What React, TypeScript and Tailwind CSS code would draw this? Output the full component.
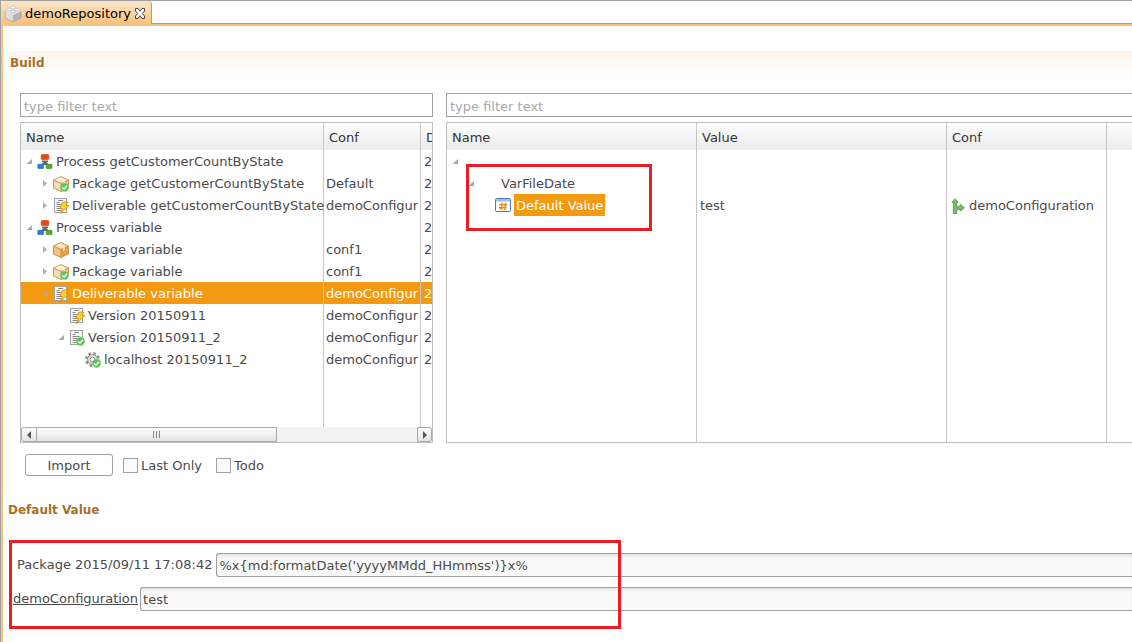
import type { ReactNode } from "react";

function BrickIcon() {
  return (
    <svg width="18" height="18" viewBox="0 0 18 18" className="shrink-0">
      <path d="M1 6 9 10v7L1 13Z" fill="#dedede" />
      <path d="M17 6 9 10v7l8-4Z" fill="#b4b4b4" />
      <path d="M1 6 9 2.500 17 6 9 10Z" fill="#f0f0f0" />
      <path d="M1 6v7l8 4 8-4V6" fill="none" stroke="#a3a3a3" strokeWidth=".8" />
      <g stroke="#bcbcbc" strokeWidth=".6" fill="#fafafa">
        <path d="M6.600 2.500v1.400c0 1.400 4.800 1.400 4.800 0V2.500" />
        <ellipse cx="9" cy="2.500" rx="2.400" ry="1.200" />
        <path d="M2.700 4.500v1.400c0 1.400 4.800 1.400 4.800 0V4.500" />
        <ellipse cx="5.100" cy="4.500" rx="2.400" ry="1.200" />
        <path d="M10.500 4.500v1.400c0 1.400 4.800 1.400 4.800 0V4.500" />
        <ellipse cx="12.900" cy="4.500" rx="2.400" ry="1.200" />
        <path d="M6.600 6.500v1.400c0 1.400 4.800 1.400 4.800 0V6.500" />
        <ellipse cx="9" cy="6.500" rx="2.400" ry="1.200" />
      </g>
    </svg>
  );
}

function CloseIcon() {
  return (
    <svg width="12" height="12" viewBox="0 0 12 12">
      <path
        d="M1.500.5h2.500L6 3.300 8 .5h2.500v2.500L8.300 5.500l2.200 2.500v2.500H8L6 7.700 4 10.500H1.500V8l2.200-2.500L1.500 3Z"
        fill="#fff"
        stroke="#4b4040"
        strokeWidth="1"
      />
    </svg>
  );
}

function CheckBadge() {
  return (
    <g>
      <circle cx="11.500" cy="11.300" r="4.200" fill="#5cc454" stroke="#8fd68a" strokeWidth=".8" />
      <path d="M9.200 11.400 11 13.100 14 9.700" fill="none" stroke="#fff" strokeWidth="1.400" />
    </g>
  );
}

function Bolt() {
  return (
    <path
      d="M10 4h5L13 7.500h3L7.500 15.500l2-5H6.700Z"
      fill="#fdd32c"
      stroke="#c48717"
      strokeWidth=".8"
      strokeLinejoin="round"
    />
  );
}

function ProcessIcon() {
  return (
    <svg width="16" height="16" viewBox="0 0 16 16" className="shrink-0">
      <path d="M5 6.500h6V8l-1.500.5 3 2.500h-9l3-2.500L5 8Z" fill="#686868" />
      <rect x="4.200" y=".5" width="7.600" height="5" rx="1" fill="#e64a12" stroke="#c93a08" strokeWidth=".6" />
      <rect x=".8" y="10.300" width="5.800" height="4.200" rx=".6" fill="#2c7fd0" stroke="#1b62ad" strokeWidth=".6" />
      <rect x="9.200" y="10.300" width="5.800" height="4.200" rx=".6" fill="#55ac2c" stroke="#3d8d1b" strokeWidth=".6" />
    </svg>
  );
}

function PackageIcon({ checked = false }: { checked?: boolean }) {
  return (
    <svg width="16" height="16" viewBox="0 0 16 16" className="shrink-0">
      <path d="M8 .5 15.500 4v8L8 15.500.5 12V4Z" fill={checked ? "#f0c084" : "#e9a046"} />
      <path d="M.5 4 8 7.500v8L.5 12Z" fill={checked ? "#f8dab0" : "#f6c37f"} />
      <path d="M8 .5 15.500 4 8 7.500.5 4Z" fill={checked ? "#fceacf" : "#fbdcae"} />
      <path
        d="M8 .5 15.500 4v8L8 15.500.5 12V4ZM.5 4 8 7.500 15.500 4M8 7.500v8"
        fill="none"
        stroke="#c68743"
        strokeWidth=".8"
        strokeLinejoin="round"
      />
      <path d="M3.500 2.700 10 6v3l2-1V5.200L5.700 1.700Z" fill="#fff3de" opacity=".8" />
      {checked && <CheckBadge />}
    </svg>
  );
}

function DocIcon({ badge }: { badge: "bolt" | "check" }) {
  return (
    <svg width="16" height="16" viewBox="0 0 16 16" className="shrink-0">
      <rect x="1.500" y=".5" width="12" height="14" fill="#f6f6f6" stroke="#a2a2a2" />
      <path
        d="M5 2.500h5M3.500 4.500h3M3.500 6.500h7M3.500 8.500h6M3.500 10.500h5M3.500 12.500h5"
        stroke="#8b8b8b"
        strokeWidth="1"
      />
      {badge === "bolt" ? <Bolt /> : <CheckBadge />}
    </svg>
  );
}

function GearIcon() {
  return (
    <svg width="16" height="16" viewBox="0 0 16 16" className="shrink-0">
      <circle cx="7.500" cy="7.500" r="6.200" fill="none" stroke="#8a8a8a" strokeWidth="2.400" strokeDasharray="2.600 2.270" />
      <circle cx="7.500" cy="7.500" r="5" fill="#dcdcdc" stroke="#8a8a8a" strokeWidth=".9" />
      <circle cx="7.500" cy="7.500" r="2.300" fill="#fff" stroke="#8a8a8a" strokeWidth=".9" />
      <CheckBadge />
    </svg>
  );
}

function HashIcon() {
  return (
    <svg width="16" height="16" viewBox="0 0 16 16" className="shrink-0">
      <rect x=".5" y="1.500" width="15" height="13" rx="1" fill="#fff" stroke="#4a78b8" />
      <path d="M1 2h14v2.500H1z" fill="#9dc0ea" />
      <path d="M7.200 5.500 6 13M10.700 5.500 9.500 13M4.300 7.800h8M3.800 10.800h8" stroke="#f08a12" strokeWidth="1.400" fill="none" />
    </svg>
  );
}

function BranchIcon() {
  return (
    <svg width="14" height="16" viewBox="0 0 14 16" className="shrink-0">
      <path
        d="M4 .7 7.200 4.300H5.600v5.200c.7-1 1.800-1.500 3.800-1.500V6.300l4 3.400-4 3.300v-1.800c-2.200 0-3.400.8-3.800 2v2.300H2.400V4.300H.8Z"
        fill="#76c16b"
        stroke="#4a9442"
        strokeWidth=".8"
        strokeLinejoin="round"
      />
    </svg>
  );
}

type Expander = "open" | "closed" | "none";

function ExpanderMark({ state }: { state: Expander }) {
  return (
    <svg width="16" height="16" viewBox="0 0 16 16" className="shrink-0">
      {state === "open" && <path d="M11 5v5H5.500Z" fill="#a9a9a9" />}
      {state === "closed" && <path d="M6 4v7L10 7.500Z" fill="#b0b0b0" />}
    </svg>
  );
}

type BuildRow = {
  level: string;
  expander: Expander;
  icon: ReactNode;
  name: string;
  conf: string;
  selected?: boolean;
};

const buildRows: BuildRow[] = [
  { level: "pl-0", expander: "open", icon: <ProcessIcon />, name: "Process getCustomerCountByState", conf: "" },
  { level: "pl-4", expander: "closed", icon: <PackageIcon checked />, name: "Package getCustomerCountByState", conf: "Default" },
  { level: "pl-4", expander: "closed", icon: <DocIcon badge="bolt" />, name: "Deliverable getCustomerCountByState", conf: "demoConfiguration" },
  { level: "pl-0", expander: "open", icon: <ProcessIcon />, name: "Process variable", conf: "" },
  { level: "pl-4", expander: "closed", icon: <PackageIcon />, name: "Package variable", conf: "conf1" },
  { level: "pl-4", expander: "closed", icon: <PackageIcon checked />, name: "Package variable", conf: "conf1" },
  { level: "pl-4", expander: "open", icon: <DocIcon badge="bolt" />, name: "Deliverable variable", conf: "demoConfiguration", selected: true },
  { level: "pl-8", expander: "none", icon: <DocIcon badge="bolt" />, name: "Version 20150911", conf: "demoConfiguration" },
  { level: "pl-8", expander: "open", icon: <DocIcon badge="check" />, name: "Version 20150911_2", conf: "demoConfiguration" },
  { level: "pl-12", expander: "none", icon: <GearIcon />, name: "localhost 20150911_2", conf: "demoConfiguration" },
];

const headCell =
  "h-[27px] border-r border-[#c6c6c6] bg-linear-to-b from-[#fdfdfd] to-[#ebebeb] px-[5px] pt-0.5 text-left font-normal text-[#333]";
const bodyCell = "h-[22px] border-r border-[#c6c6c6] p-0 pt-0.5";
const filterInput =
  "h-6 w-full border border-[#a0a0a0] bg-white px-[3px] pt-0.5 outline-none placeholder:text-[#a9a9a9]";
const valueInput =
  "h-6 min-w-0 flex-1 rounded-l-[3px] border border-r-0 border-[#a0a0a0] bg-[#fafafa] px-[2px] shadow-[inset_0_3px_4px_-2px_#d4d4d4] outline-none";
const checkbox = "size-[15px] appearance-none border border-[#a0a0a0] bg-[#fafbfd] checked:bg-[#f49a12]";
const heading = "text-[12px] leading-4 font-bold text-[#a76f26]";

function BuildTree() {
  return (
    <div className="border border-[#bdbdbd]">
      <div className="overflow-hidden">
        <table className="w-[480px] table-fixed border-separate border-spacing-0">
          <colgroup>
            <col className="w-[303px]" />
            <col className="w-[97px]" />
            <col />
          </colgroup>
          <thead>
            <tr>
              <th className={headCell}>Name</th>
              <th className={headCell}>Conf</th>
              <th className={headCell}>Date</th>
            </tr>
          </thead>
          <tbody>
            {buildRows.map((row, i) => (
              <tr key={i} className={row.selected ? "bg-[#f49a12] text-white" : ""}>
                <td className={bodyCell}>
                  <div className={`flex items-center ${row.level}`}>
                    <ExpanderMark state={row.expander} />
                    {row.icon}
                    <span className="ml-[3px] whitespace-nowrap">{row.name}</span>
                  </div>
                </td>
                <td className={bodyCell}>
                  <div className="mr-0.5 ml-0.5 overflow-hidden whitespace-nowrap">{row.conf}</div>
                </td>
                <td className={`${bodyCell} pl-[3px]`}>2015</td>
              </tr>
            ))}
            <tr>
              <td className="h-[57px] border-r border-[#c6c6c6]" />
              <td className="h-[57px] border-r border-[#c6c6c6]" />
              <td />
            </tr>
          </tbody>
        </table>
      </div>
      <div className="flex h-[15px] bg-[#f2f2f2]">
        <button
          aria-label="Scroll left"
          className="flex w-4 items-center justify-center rounded-l-[3px] border border-[#a9a9a9] bg-linear-to-b from-white to-[#e4e4e4]"
        >
          <svg width="6" height="8" viewBox="0 0 6 8">
            <path d="M5 0v8L1 4Z" fill="#555" />
          </svg>
        </button>
        <div className="flex w-[240px] items-center justify-center gap-0.5 border border-l-0 border-[#a9a9a9] bg-linear-to-b from-white to-[#e2e2e2]">
          <span className="h-[7px] w-px bg-[#888]" />
          <span className="h-[7px] w-px bg-[#888]" />
          <span className="h-[7px] w-px bg-[#888]" />
        </div>
        <button
          aria-label="Scroll right"
          className="ml-auto flex w-[15px] items-center justify-center rounded-r-[3px] border border-[#a9a9a9] bg-linear-to-b from-white to-[#e4e4e4]"
        >
          <svg width="6" height="8" viewBox="0 0 6 8">
            <path d="M1 0v8L5 4Z" fill="#555" />
          </svg>
        </button>
      </div>
    </div>
  );
}

function VariableTree() {
  return (
    <div className="relative flex-1 border border-r-0 border-[#bdbdbd]">
      <table className="h-full w-full table-fixed border-separate border-spacing-0">
        <colgroup>
          <col className="w-[250px]" />
          <col className="w-[250px]" />
          <col className="w-[160px]" />
          <col />
        </colgroup>
        <thead>
          <tr>
            <th className={headCell}>Name</th>
            <th className={headCell}>Value</th>
            <th className={headCell}>Conf</th>
            <th className="h-[27px] bg-linear-to-b from-[#fdfdfd] to-[#ebebeb]" />
          </tr>
        </thead>
        <tbody>
          <tr>
            <td className={bodyCell}>
              <ExpanderMark state="open" />
            </td>
            <td className={bodyCell} />
            <td className={bodyCell} />
            <td />
          </tr>
          <tr>
            <td className={bodyCell}>
              <div className="flex items-center pl-4">
                <ExpanderMark state="open" />
                <span className="ml-[22px]">VarFileDate</span>
              </div>
            </td>
            <td className={bodyCell} />
            <td className={bodyCell} />
            <td />
          </tr>
          <tr>
            <td className="h-[22px] border-r border-[#c6c6c6] p-0">
              <div className="flex items-center pl-12">
                <HashIcon />
                <span className="ml-[3px] bg-[#f49a12] px-0.5 pt-0.5 leading-5 text-white">Default Value</span>
              </div>
            </td>
            <td className={`${bodyCell} pl-[3px]`}>test</td>
            <td className={bodyCell}>
              <div className="flex items-center gap-1 pl-1">
                <BranchIcon />
                <span>demoConfiguration</span>
              </div>
            </td>
            <td />
          </tr>
          <tr className="h-full">
            <td className="border-r border-[#c6c6c6]" />
            <td className="border-r border-[#c6c6c6]" />
            <td className="border-r border-[#c6c6c6]" />
            <td />
          </tr>
        </tbody>
      </table>
      <div className="pointer-events-none absolute top-[41px] left-[19px] h-[67px] w-[186px] border-3 border-[#ed1c24]" />
    </div>
  );
}

export default function App() {
  return (
    <div className="flex min-h-screen flex-col overflow-hidden border-l border-[#a0a0a0] bg-white font-['DejaVu_Sans',Verdana,sans-serif] text-[13px] leading-4 text-[#4a4a4a]">
      <header className="flex h-6 border-t border-[#a0a0a0]">
        <div className="flex items-center gap-[3px] rounded-t-sm border-r border-[#a0a0a0] bg-linear-to-b from-[#fae6cc] to-[#f6c27a] pt-0.5 pr-[5px] pl-[3px] text-black">
          <BrickIcon />
          <span>demoRepository</span>
          <button aria-label="Close">
            <CloseIcon />
          </button>
        </div>
        <div className="flex-1 border-b border-[#a0a0a0]" />
      </header>

      <main className="flex-1 border-t-2 border-l-2 border-[#f8c47d]">
        <section className="pt-[25px]">
          <div className="ml-1 h-[42px] rounded-tl-md bg-linear-to-b from-[#fdf5ec] to-white to-60% pt-1 pl-[3px]">
            <h2 className={heading}>Build</h2>
          </div>
          <div className="grid grid-cols-[413px_minmax(0,1fr)] gap-[13px] pl-[17px]">
            <div className="flex flex-col gap-[5px]">
              <input aria-label="Filter builds" placeholder="type filter text" className={filterInput} />
              <BuildTree />
            </div>
            <div className="flex flex-col gap-[5px]">
              <input aria-label="Filter variables" placeholder="type filter text" className={`${filterInput} border-r-0`} />
              <VariableTree />
            </div>
          </div>
          <div className="flex items-center pt-[11px] pl-[22px]">
            <button className="h-[22px] w-[88px] rounded-[3px] border border-[#a0a0a0] bg-white pt-0.5">Import</button>
            <label className="ml-2.5 flex items-center gap-[3px]">
              <input type="checkbox" className={checkbox} />
              <span className="pt-0.5">Last Only</span>
            </label>
            <label className="ml-3.5 flex items-center gap-[3px]">
              <input type="checkbox" className={checkbox} />
              <span className="pt-0.5">Todo</span>
            </label>
          </div>
        </section>

        <section className="pt-[26px]">
          <h2 className={`${heading} pl-[5px]`}>Default Value</h2>
          <div className="relative mt-[22px] flex flex-col gap-2.5 pt-[13px]">
            <div className="flex items-center gap-1 pl-3.5">
              <label htmlFor="package-value">Package 2015/09/11 17:08:42</label>
              <input id="package-value" defaultValue="%x{md:formatDate('yyyyMMdd_HHmmss')}x%" className={valueInput} />
            </div>
            <div className="flex items-center gap-0.5 pl-2.5">
              <a href="#configuration" className="underline">
                demoConfiguration
              </a>
              <input aria-label="demoConfiguration" defaultValue="test" className={valueInput} />
            </div>
            <div className="pointer-events-none absolute top-0 left-1.5 h-[89px] w-[612px] border-3 border-[#ed1c24]" />
          </div>
        </section>
      </main>
    </div>
  );
}
